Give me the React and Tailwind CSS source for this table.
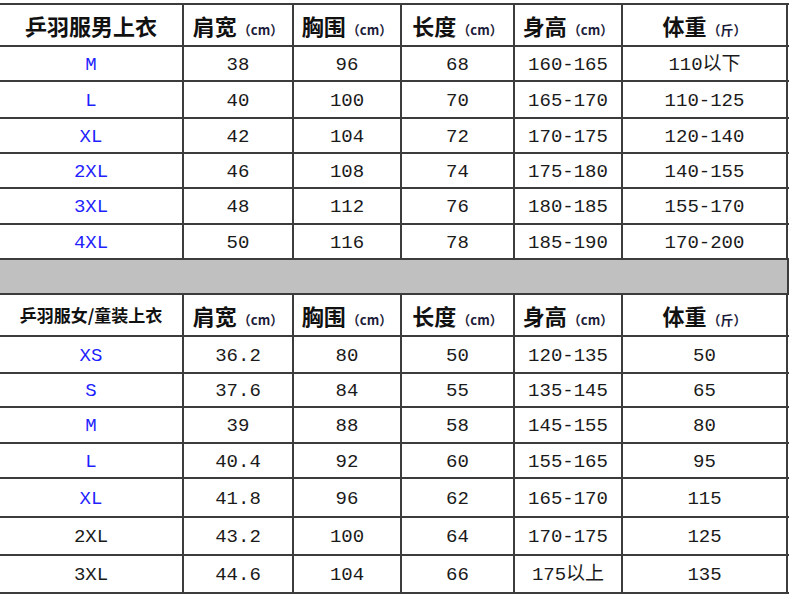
import React from 'react';

const cols = 'grid grid-cols-[184px_110px_108px_113px_108px_165px]';
const cell = 'flex items-center justify-center border-r-2 border-[#3c3c3c]';
const num = "font-['Liberation_Mono','Noto_Sans_CJK_SC',monospace] text-[19px] pt-[3px]";
const cjk = "font-['Noto_Sans_CJK_SC',sans-serif] font-bold text-[#111]";

const menRows = [
  { h: 'h-[35px]', size: 'M', blue: true, v: ['38', '96', '68', '160-165', '110以下'] },
  { h: 'h-[37px]', size: 'L', blue: true, v: ['40', '100', '70', '165-170', '110-125'] },
  { h: 'h-[35px]', size: 'XL', blue: true, v: ['42', '104', '72', '170-175', '120-140'] },
  { h: 'h-[35px]', size: '2XL', blue: true, v: ['46', '108', '74', '175-180', '140-155'] },
  { h: 'h-[36px]', size: '3XL', blue: true, v: ['48', '112', '76', '180-185', '155-170'] },
  { h: 'h-[35px]', size: '4XL', blue: true, v: ['50', '116', '78', '185-190', '170-200'] },
];

const kidRows = [
  { h: 'h-[37px]', size: 'XS', blue: true, v: ['36.2', '80', '50', '120-135', '50'] },
  { h: 'h-[34px]', size: 'S', blue: true, v: ['37.6', '84', '55', '135-145', '65'] },
  { h: 'h-[36px]', size: 'M', blue: true, v: ['39', '88', '58', '145-155', '80'] },
  { h: 'h-[35px]', size: 'L', blue: true, v: ['40.4', '92', '60', '155-165', '95'] },
  { h: 'h-[39px]', size: 'XL', blue: true, v: ['41.8', '96', '62', '165-170', '115'] },
  { h: 'h-[38px]', size: '2XL', blue: false, v: ['43.2', '100', '64', '170-175', '125'] },
  { h: 'h-[38px]', size: '3XL', blue: false, v: ['44.6', '104', '66', '175以上', '135'] },
];

const HeadCell = ({ label, unit }) => (
  <div className={cell}>
    <div className={`${cjk} flex items-baseline`}>
      <span className="text-[22px]">{label}</span>
      <span className="text-[13px] text-[#1c1c3a] ml-[1px]">（{unit}）</span>
    </div>
  </div>
);

const Header = ({ title, small }) => (
  <div className={`${cols} h-[42px] border-b-2 border-[#3c3c3c]`}>
    <div className={`${cell} ${cjk} whitespace-nowrap ${small ? 'text-[17px]' : 'text-[22px]'}`}>{title}</div>
    <HeadCell label="肩宽" unit="cm" />
    <HeadCell label="胸围" unit="cm" />
    <HeadCell label="长度" unit="cm" />
    <HeadCell label="身高" unit="cm" />
    <HeadCell label="体重" unit="斤" />
  </div>
);

const Row = ({ row }) => (
  <div className={`${cols} ${row.h} border-b-2 border-[#3c3c3c]`}>
    <div className={`${cell} ${num} ${row.blue ? 'text-[#1f1fff]' : 'text-[#1a1a1a]'}`}>{row.size}</div>
    {row.v.map((x, i) => (
      <div key={i} className={`${cell} ${num} text-[#1a1a1a]`}>{x}</div>
    ))}
  </div>
);

const App = () => {
  return (
    <div className="w-[790px] h-[594px] bg-white pt-[3px] overflow-hidden">
      <div className="w-[789px] border-t-2 border-[#3c3c3c]">
        <Header title="乒羽服男上衣" />
        {menRows.map((r, i) => <Row key={i} row={r} />)}
        <div className="h-[35px] bg-[#c0c0c0] border-b-2 border-r-2 border-[#3c3c3c]"></div>
        <Header title="乒羽服女/童装上衣" small />
        {kidRows.map((r, i) => <Row key={i} row={r} />)}
      </div>
    </div>
  );
};

export default App;
